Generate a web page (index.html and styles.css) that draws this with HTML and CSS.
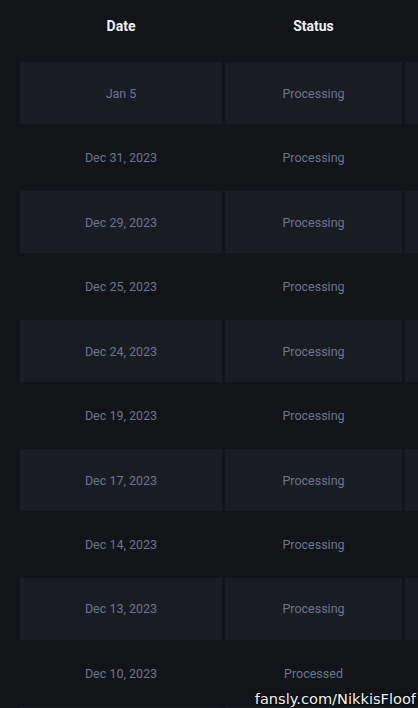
FILE: index.html
```html
<!DOCTYPE html>
<html>
<head>
<meta charset="utf-8">
<link rel="stylesheet" href="styles.css">
</head>
<body>
<div class="page">
  <div class="table">
    <div class="th">Date</div><div class="th">Status</div><div class="th"></div>
    <div class="td s">Jan 5</div><div class="td s">Processing</div><div class="td s"></div>
    <div class="td">Dec 31, 2023</div><div class="td">Processing</div><div class="td"></div>
    <div class="td s">Dec 29, 2023</div><div class="td s">Processing</div><div class="td s"></div>
    <div class="td">Dec 25, 2023</div><div class="td">Processing</div><div class="td"></div>
    <div class="td s">Dec 24, 2023</div><div class="td s">Processing</div><div class="td s"></div>
    <div class="td">Dec 19, 2023</div><div class="td">Processing</div><div class="td"></div>
    <div class="td s">Dec 17, 2023</div><div class="td s">Processing</div><div class="td s"></div>
    <div class="td">Dec 14, 2023</div><div class="td">Processing</div><div class="td"></div>
    <div class="td s">Dec 13, 2023</div><div class="td s">Processing</div><div class="td s"></div>
    <div class="td">Dec 10, 2023</div><div class="td">Processed</div><div class="td"></div>
    <div class="td s"></div><div class="td s"></div><div class="td s"></div>
  </div>
</div>
<div class="watermark">fansly.com/NikkisFloof</div>
</body>
</html>
```
FILE: styles.css
```css
html, body {
  margin: 0;
  padding: 0;
  background: #121418;
  width: 418px;
  height: 708px;
  overflow: hidden;
}
.page {
  padding-left: 20px;
  height: 708px;
  overflow: hidden;
}
.table {
  display: grid;
  grid-template-columns: 202px 177px 1fr;
  grid-template-rows: 60px;
  grid-auto-rows: 62px;
  column-gap: 3px;
  row-gap: 2.44px;
  font-family: Roboto, "Noto Sans", sans-serif;
}
.th {
  display: flex;
  align-items: center;
  justify-content: center;
  padding-bottom: 8px;
  color: #eef0f6;
  font-weight: 700;
  font-size: 14px;
}
.td {
  display: flex;
  align-items: center;
  justify-content: center;
  color: #6e7390;
  font-size: 12.5px;
}
.td.s {
  background: #1a1c24;
}
.watermark {
  position: absolute;
  right: 2px;
  bottom: 0px;
  font-family: "DejaVu Sans", sans-serif;
  font-size: 14.6px;
  color: #f4f4f4;
  text-shadow: 0 0 2px #000, 0 0 1px #000;
  line-height: 18px;
}
```
